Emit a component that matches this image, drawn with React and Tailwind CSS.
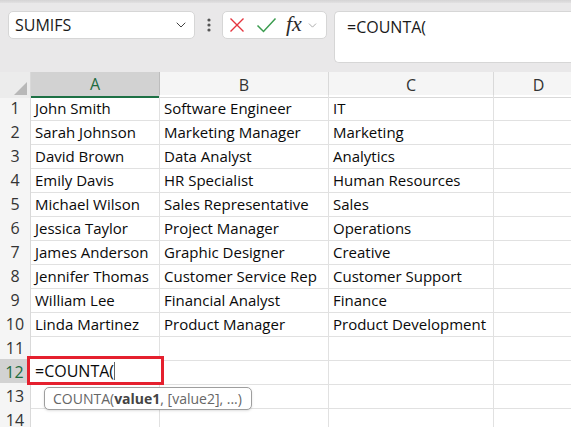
import React from 'react';
import { ChevronDown } from 'lucide-react';

const rows = [
  ['John Smith', 'Software Engineer', 'IT'],
  ['Sarah Johnson', 'Marketing Manager', 'Marketing'],
  ['David Brown', 'Data Analyst', 'Analytics'],
  ['Emily Davis', 'HR Specialist', 'Human Resources'],
  ['Michael Wilson', 'Sales Representative', 'Sales'],
  ['Jessica Taylor', 'Project Manager', 'Operations'],
  ['James Anderson', 'Graphic Designer', 'Creative'],
  ['Jennifer Thomas', 'Customer Service Rep', 'Customer Support'],
  ['William Lee', 'Financial Analyst', 'Finance'],
  ['Linda Martinez', 'Product Manager', 'Product Development'],
  ['', '', ''],
  ['', '', ''],
  ['', '', ''],
  ['', '', ''],
];

const cols = 'grid grid-cols-[31px_129px_169px_165px_90px]';

const Toolbar = () => (
  <div className="h-[72px] bg-[#e9e8e9] relative">
    <div className="h-[3px] bg-gradient-to-b from-[#d4d3d4] to-[#e2e1e2]" />
    <div className="flex items-start pt-[8px] pl-[8px]">
      <div className="shrink-0 w-[187px] h-[28px] bg-white rounded-[5px] border border-[#d6d6d6] flex items-center pl-[6px] pr-[5px] justify-between">
        <span className="text-[16px] text-[#1a1a1a]">SUMIFS</span>
        <ChevronDown size={16} strokeWidth={1.5} className="text-[#424242]" />
      </div>
      <div className="shrink-0 w-[27px] h-[28px] flex items-center justify-center">
        <svg width="4" height="14" viewBox="0 0 4 14">
          <circle cx="2" cy="2" r="1.6" fill="#555" />
          <circle cx="2" cy="7" r="1.6" fill="#555" />
          <circle cx="2" cy="12" r="1.6" fill="#555" />
        </svg>
      </div>
      <div className="shrink-0 w-[105px] h-[28px] bg-white rounded-[5px] border border-[#d6d6d6] flex items-center">
        <svg width="16" height="16" viewBox="0 0 16 16" className="ml-[6px] shrink-0">
          <path d="M1.5 1.5 L14.5 14.5 M14.5 1.5 L1.5 14.5" stroke="#e5343e" strokeWidth="1.4" fill="none" />
        </svg>
        <svg width="21" height="16" viewBox="0 0 21 16" className="ml-[11px] shrink-0">
          <path d="M1.5 8.5 L7.5 14.5 L19.5 1.5" stroke="#3b9c4f" strokeWidth="1.5" fill="none" />
        </svg>
        <span className="ml-[9px] text-[22px] italic text-[#2b2b2b] leading-none -mt-[2px]" style={{ fontFamily: '"Liberation Serif", serif' }}>fx</span>
        <ChevronDown size={13} strokeWidth={1.5} className="ml-[4px] text-[#9a9a9a] shrink-0" />
      </div>
      <div className="shrink-0 ml-[7px] w-[250px] h-[52px] bg-white rounded-l-[5px] border border-[#d6d6d6] border-r-0 pl-[12px] pt-[3px]">
        <span className="text-[16px] text-[#1a1a1a]">=COUNTA(</span>
      </div>
    </div>
  </div>
);

const Header = () => (
  <div className={`${cols} h-[23px] bg-[#f5f5f5] text-[16px] text-[#333]`}>
    <div className="bg-[#ececec] border-r border-[#d9d9d9] relative">
      <div className="absolute right-[3px] bottom-[3px] w-0 h-0 border-l-[13px] border-l-transparent border-b-[13px] border-b-[#b8b8b8]" />
    </div>
    <div className="bg-[#d2d2d2] text-[#1e6b3f] border-r border-[#bdbdbd] border-b-2 border-b-[#1e7145] flex items-center justify-center">A</div>
    <div className="border-r border-[#d9d9d9] border-b border-b-[#d9d9d9] flex items-center justify-center">B</div>
    <div className="border-r border-[#d9d9d9] border-b border-b-[#d9d9d9] flex items-center justify-center">C</div>
    <div className="border-r border-[#d9d9d9] border-b border-b-[#d9d9d9] flex items-center justify-center">D</div>
  </div>
);

export default function App() {
  return (
    <div className="w-[571px] h-[427px] overflow-hidden bg-white relative" style={{ fontFamily: '"Open Sans", "Liberation Sans", sans-serif' }}>
      <Toolbar />
      <Header />
      {rows.map((r, i) => (
        <div key={i} className={`${cols} h-[24px] text-[15px] text-[#0a0a0a]`}>
          <div className={`${i === 11 ? 'bg-[#d2d2d2] text-[#1e6b3f] border-r-2 border-r-[#1e7145]' : 'bg-[#f5f5f5] text-[#333] border-r border-r-[#d9d9d9]'} border-b border-b-[#d9d9d9] flex items-center justify-center text-[16px] pt-px`}>
            {i + 1}
          </div>
          {[...r, ''].map((c, j) => (
            <div key={j} className="border-r border-b border-[#e1e1e1] pl-[4px] pt-px flex items-center whitespace-nowrap overflow-hidden">
              {c}
            </div>
          ))}
        </div>
      ))}
      <div className="absolute left-[27px] top-[356px] w-[137px] h-[29px] border-[3px] border-[#e5202e] bg-white flex items-center pl-[5px] text-[16px] text-[#0a0a0a]">
        =COUNTA(<span className="w-px h-[18px] bg-[#666]" />
      </div>
      <div className="absolute left-[44px] top-[387px] w-[208px] h-[23px] rounded-[5px] border border-[#9e9e9e] bg-white shadow-sm flex items-center pl-[8px] text-[14px] text-[#666]">
        COUNTA(<b className="text-[#444]">value1</b>, [value2], ...)
      </div>
    </div>
  );
}
